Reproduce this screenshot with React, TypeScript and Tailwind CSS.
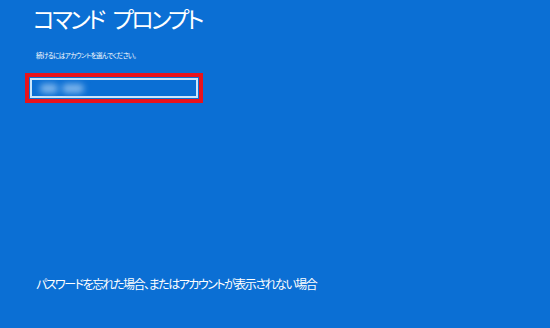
import React from "react";

export default function App() {
  return (
    <div
      className="w-[550px] h-[328px] bg-[#0b6fd4] text-white flex flex-col overflow-hidden"
      style={{ fontFamily: '"Noto Sans CJK JP", "Noto Sans", sans-serif' }}
    >
      <h1 className="pl-[33px] pt-[4px] text-[23px] leading-[28px] font-normal [font-feature-settings:'palt'] tracking-[-2.6px] flex">
        <span>コマンド</span>
        <span className="ml-[9px]">プロンプト</span>
      </h1>
      <p className="pl-[36px] mt-[19px] text-[6.5px] leading-[8px] [font-feature-settings:'palt'] tracking-[-0.55px]">
        続けるにはアカウントを選んでください。
      </p>
      <div className="ml-[25px] mt-[14px] w-[178px] h-[30px] border-[4px] border-[#e8131c] p-[1px]">
        <div className="h-full w-full border-[2px] border-[#cbe6fb] flex items-center gap-[4px] pl-[8px]">
          <span className="w-[18px] h-[9px] rounded-full bg-[#7fb6ec] blur-[3px]" />
          <span className="w-[22px] h-[9px] rounded-full bg-[#7fb6ec] blur-[3px]" />
        </div>
      </div>
      <p className="mt-auto mb-[37px] pl-[36px] text-[12px] leading-[14px] [font-feature-settings:'palt'] tracking-[-1.5px]">
        パスワードを忘れた場合、またはアカウントが表示されない場合
      </p>
    </div>
  );
}
